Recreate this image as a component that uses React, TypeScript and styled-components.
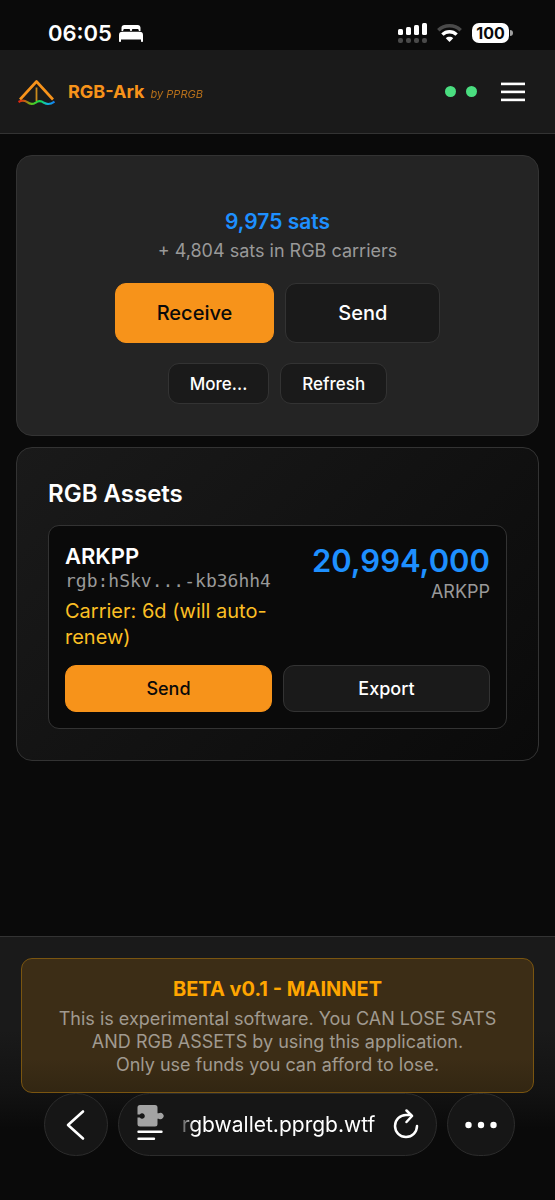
import React from 'react';
import styled, { createGlobalStyle } from 'styled-components';

const GlobalStyle = createGlobalStyle`
  *, *::before, *::after { box-sizing: border-box; }
  body {
    margin: 0;
    background: #0a0a0a;
    color: #fff;
    font-family: Inter, "Liberation Sans", sans-serif;
  }
  button { font-family: inherit; cursor: pointer; }
  h1, h2, h3, p { margin: 0; }
`;

const Page = styled.div`
  min-height: 100vh;
  display: flex;
  flex-direction: column;
`;

const StatusBar = styled.div`
  display: flex;
  align-items: center;
  justify-content: space-between;
  height: 50px;
  padding: 16px 42px 0 48px;
`;

const StatusGroup = styled.div<{ $gap: number }>`
  display: flex;
  align-items: center;
  gap: ${(p) => p.$gap}px;
`;

const Clock = styled.time`
  font-size: 22px;
  line-height: 28px;
  font-weight: 600;
`;

const Battery = styled.div`
  display: flex;
  align-items: center;
  gap: 1px;
`;

const BatteryBody = styled.span`
  width: 37px;
  height: 20px;
  border-radius: 7px;
  background: #fff;
  color: #0a0a0a;
  font-size: 16px;
  line-height: 20px;
  font-weight: 700;
  text-align: center;
`;

const BatteryTip = styled.span`
  width: 3px;
  height: 6px;
  border-radius: 0 3px 3px 0;
  background: #a0a0a0;
`;

const Header = styled.header`
  display: flex;
  align-items: center;
  justify-content: space-between;
  height: 84px;
  padding: 0 30px 0 16px;
  background: #1a1a1a;
  border-bottom: 1px solid #333;
`;

const Brand = styled.a`
  display: flex;
  align-items: center;
  gap: 10px;
  color: #f7931a;
  text-decoration: none;
`;

const BrandText = styled.span`
  display: flex;
  align-items: baseline;
  gap: 6px;
`;

const BrandName = styled.span`
  font-size: 18px;
  line-height: 26px;
  font-weight: 700;
`;

const Byline = styled.span`
  font-size: 11px;
  line-height: 16px;
  font-style: italic;
  opacity: 0.7;
`;

const HeaderActions = styled.div`
  display: flex;
  align-items: center;
  gap: 10px;
`;

const StatusDot = styled.span`
  width: 11px;
  height: 11px;
  border-radius: 50%;
  background: #4ade80;
`;

const MenuButton = styled.button`
  display: flex;
  margin-left: 14px;
  padding: 0;
  border: 0;
  background: none;
  color: #fff;
`;

const Main = styled.main`
  flex: 1;
  display: flex;
  flex-direction: column;
  gap: 11px;
  padding: 21px 16px;
`;

const BalanceCard = styled.section`
  display: flex;
  flex-direction: column;
  align-items: center;
  padding: 52px 32px 31px;
  border: 1px solid #333;
  border-radius: 16px;
  background: #242424;
`;

const Balance = styled.p`
  color: #1e90ff;
  font-size: 21px;
  line-height: 28px;
  font-weight: 600;
`;

const CarrierBalance = styled.p`
  margin-bottom: 17px;
  color: #999;
  font-size: 18px;
  line-height: 30px;
`;

const ButtonRow = styled.div`
  display: flex;
  gap: 11px;

  & + & { margin-top: 20px; }
`;

const Button = styled.button<{ $primary?: boolean; $size: 'large' | 'small' | 'fill' }>`
  height: ${(p) => ({ large: 60, small: 41, fill: 47 })[p.$size]}px;
  padding: 0 ${(p) => ({ large: 41, small: 21, fill: 16 })[p.$size]}px;
  min-width: ${(p) => (p.$size === 'large' ? '155px' : '0')};
  flex: ${(p) => (p.$size === 'fill' ? '1 1 0' : 'none')};
  border: 1px solid ${(p) => (p.$primary ? '#f7931a' : '#333')};
  border-radius: 11px;
  background: ${(p) => (p.$primary ? '#f7931a' : '#1a1a1a')};
  color: ${(p) => (p.$primary ? '#0a0a0a' : '#fff')};
  font-size: ${(p) => ({ large: 20, small: 17, fill: 18 })[p.$size]}px;
  font-weight: 500;
`;

const AssetsCard = styled.section`
  padding: 31px;
  border: 1px solid #333;
  border-radius: 16px;
  background: linear-gradient(135deg, #1a1a1a 0%, #0a0a0a 100%);
`;

const SectionTitle = styled.h2`
  margin-bottom: 16px;
  font-size: 24px;
  line-height: 30px;
  font-weight: 600;
`;

const Asset = styled.article`
  padding: 16px;
  border: 1px solid #333;
  border-radius: 11px;
  background: #0a0a0a;
`;

const AssetInfo = styled.div`
  display: flex;
  justify-content: space-between;
  gap: 16px;
  margin-bottom: 15px;
`;

const AssetName = styled.h3`
  font-size: 22px;
  line-height: 28px;
  font-weight: 600;
`;

const AssetId = styled.p`
  margin-bottom: 6px;
  color: #999;
  font-family: "DejaVu Sans Mono", monospace;
  font-size: 18px;
  line-height: 22px;
`;

const CarrierNote = styled.p`
  color: #fbbf24;
  font-size: 20px;
  line-height: 26px;
`;

const AssetAmount = styled.div`
  text-align: right;
`;

const Amount = styled.p`
  color: #1e90ff;
  font-size: 31px;
  line-height: 38px;
  font-weight: 600;
`;

const Ticker = styled.p`
  color: #999;
  font-size: 18px;
  line-height: 24px;
`;

const Footer = styled.footer`
  padding: 21px 21px 0;
  border-top: 1px solid #333;
  background: linear-gradient(#1a1a1a 60%, #121212);
`;

const Notice = styled.div`
  padding: 16px 32px;
  border: 1px solid #7a5510;
  border-radius: 11px;
  background: linear-gradient(#3c2d16 75%, #322612);
  text-align: center;
`;

const NoticeTitle = styled.p`
  margin-bottom: 4px;
  color: #ffa500;
  font-size: 20px;
  line-height: 28px;
  font-weight: 700;
`;

const NoticeText = styled.p`
  color: #a09a90;
  font-size: 18px;
  line-height: 23px;
`;

const BrowserBar = styled.nav`
  display: flex;
  gap: 10px;
  padding: 0 40px 44px 44px;
  background: linear-gradient(#121212, #0a0a0a 36px);
`;

const RoundButton = styled.button<{ $width: number }>`
  display: flex;
  align-items: center;
  justify-content: center;
  width: ${(p) => p.$width}px;
  height: 63px;
  padding: 0;
  border: 1px solid #2c2c2c;
  border-radius: 34px;
  background: #161616;
  color: #fff;
`;

const AddressBar = styled.div`
  flex: 1;
  display: flex;
  align-items: center;
  justify-content: space-between;
  height: 63px;
  padding: 0 17px 0 18px;
  border: 1px solid #2c2c2c;
  border-radius: 32px;
  background: #161616;
`;

const BarButton = styled.button`
  display: flex;
  padding: 0;
  border: 0;
  background: none;
  color: #fff;
`;

const Address = styled(BarButton)`
  font-size: 21px;
  line-height: 28px;
  mask-image: linear-gradient(90deg, rgba(0, 0, 0, 0.25), #000 12px);
`;

const BedIcon = () => (
  <svg width="24" height="17" viewBox="0 0 24 17" fill="#fff" aria-hidden="true">
    <path d="M2.5 6V2.8C2.5 1.2 3.6 0 5.3 0h13.4c1.7 0 2.8 1.2 2.8 2.8V6h-1.7V5.400c0-1-.5-1.500-1.500-1.500h-4c-.9 0-1.500.5-1.500 1.400V6h-1.600v-.7c0-.9-.6-1.400-1.500-1.400h-4c-1 0-1.500.5-1.500 1.500V6z" />
    <path d="M0 10c0-2 1.200-3.200 3.200-3.200h17.600C22.800 6.800 24 8 24 10v6.200c0 .5-.3.800-.8.800h-.4c-.5 0-.8-.3-.8-.8V14.500H2v1.700c0 .5-.3.800-.8.800H.8c-.5 0-.8-.3-.8-.8z" />
  </svg>
);

const SignalIcon = () => (
  <svg width="29" height="20" viewBox="0 0 29 20" aria-hidden="true">
    {[6, 8, 10, 12].map((h, i) => (
      <g key={h}>
        <rect x={i * 8} y={12 - h} width="5" height={h} rx="1.500" fill="#fff" />
        <rect x={i * 8} y="15" width="5" height="5" rx="2" fill="#4a4a4a" />
      </g>
    ))}
  </svg>
);

const WifiIcon = () => (
  <svg width="25" height="18" viewBox="0 0 25 18" fill="none" strokeWidth="3.400" aria-hidden="true">
    <path d="M1.300 6.300C7.300.2 17.700.2 23.700 6.300" stroke="#4a4a4a" />
    <path d="M5.400 10.600c4-3.900 10.200-3.900 14.200 0" stroke="#fff" />
    <path d="M12.500 18l-3.700-3.800c2-1.900 5.400-1.900 7.400 0z" fill="#fff" />
  </svg>
);

const LogoIcon = () => (
  <svg width="42" height="30" viewBox="0 0 42 30" fill="none" aria-hidden="true">
    <defs>
      <linearGradient id="wave" x1="2" y1="0" x2="39" y2="0" gradientUnits="userSpaceOnUse">
        <stop offset="0" stopColor="#e81c10" />
        <stop offset="0.18" stopColor="#c85a10" />
        <stop offset="0.36" stopColor="#5cc41c" />
        <stop offset="0.6" stopColor="#14dc50" />
        <stop offset="0.8" stopColor="#10b4e0" />
        <stop offset="1" stopColor="#1478f0" />
      </linearGradient>
    </defs>
    <path d="M4 22.500L20.500 4.500 37 22.500" stroke="#f7931a" strokeWidth="2.600" strokeLinejoin="round" />
    <path d="M20.500 10.500V24" stroke="#c98a1c" strokeWidth="1.800" />
    <path
      d="M2.500 25c3-2 6-1.800 8.800.2 2.600 2.200 5.400 2.400 8.400.4 2.800-2.200 5.300-2 8.300.2 3.600 2.200 6.600 1.600 10.500-1.200"
      stroke="url(#wave)"
      strokeWidth="2.200"
    />
  </svg>
);

const MenuIcon = () => (
  <svg width="24" height="20" viewBox="0 0 24 20" fill="#fff" aria-hidden="true">
    <rect y="0.600" width="24" height="2.600" />
    <rect y="8.600" width="24" height="2.600" />
    <rect y="16.600" width="24" height="2.600" />
  </svg>
);

const BackIcon = () => (
  <svg width="20" height="32" viewBox="0 0 20 32" fill="none" stroke="currentColor" strokeWidth="2.600" strokeLinecap="round" strokeLinejoin="round" aria-hidden="true">
    <path d="M17 2.500L2 16l15 13.500" />
  </svg>
);

const SiteIcon = () => (
  <svg width="27" height="40" viewBox="0 0 27 40" aria-hidden="true">
    <path
      d="M3 0h15a2.500 2.500 0 0 1 2.500 2.500V8.300h1.200a3.200 3.200 0 1 1 0 5.400h-1.200V19a2.500 2.500 0 0 1-2.500 2.500H3A2.500 2.500 0 0 1 .5 19v-6.600h2.300a2.700 2.700 0 1 0 0-2.800H.5V2.500A2.500 2.500 0 0 1 3 0z"
      fill="#a3a3a3"
    />
    <path d="M1.500 26.800h23M1.500 33.800H17" stroke="#fff" strokeWidth="2.400" strokeLinecap="round" />
  </svg>
);

const ReloadIcon = () => (
  <svg width="26" height="32" viewBox="0 0 26 32" fill="none" stroke="currentColor" strokeWidth="2.500" strokeLinecap="round" strokeLinejoin="round" aria-hidden="true">
    <path d="M24 17A11 11 0 1 1 13 6h5" />
    <path d="M13.500 .500l5.500 5.500-5.500 6" transform="translate(0 1)" />
  </svg>
);

const MoreIcon = () => (
  <svg width="32" height="8" viewBox="0 0 32 8" fill="currentColor" aria-hidden="true">
    <circle cx="3.500" cy="4" r="3.200" />
    <circle cx="16" cy="4" r="3.200" />
    <circle cx="28.500" cy="4" r="3.200" />
  </svg>
);

export default function App() {
  return (
    <Page>
      <GlobalStyle />
      <StatusBar>
        <StatusGroup $gap={7}>
          <Clock>06:05</Clock>
          <BedIcon />
        </StatusGroup>
        <StatusGroup $gap={10}>
          <SignalIcon />
          <WifiIcon />
          <Battery>
            <BatteryBody>100</BatteryBody>
            <BatteryTip />
          </Battery>
        </StatusGroup>
      </StatusBar>

      <Header>
        <Brand href="#">
          <LogoIcon />
          <BrandText>
            <BrandName>RGB-Ark</BrandName>
            <Byline>by PPRGB</Byline>
          </BrandText>
        </Brand>
        <HeaderActions>
          <StatusDot />
          <StatusDot />
          <MenuButton aria-label="Menu">
            <MenuIcon />
          </MenuButton>
        </HeaderActions>
      </Header>

      <Main>
        <BalanceCard>
          <Balance>9,975 sats</Balance>
          <CarrierBalance>+ 4,804 sats in RGB carriers</CarrierBalance>
          <ButtonRow>
            <Button $primary $size="large">Receive</Button>
            <Button $size="large">Send</Button>
          </ButtonRow>
          <ButtonRow>
            <Button $size="small">More...</Button>
            <Button $size="small">Refresh</Button>
          </ButtonRow>
        </BalanceCard>

        <AssetsCard>
          <SectionTitle>RGB Assets</SectionTitle>
          <Asset>
            <AssetInfo>
              <div>
                <AssetName>ARKPP</AssetName>
                <AssetId>rgb:hSkv...-kb36hh4</AssetId>
                <CarrierNote>Carrier: 6d (will auto-renew)</CarrierNote>
              </div>
              <AssetAmount>
                <Amount>20,994,000</Amount>
                <Ticker>ARKPP</Ticker>
              </AssetAmount>
            </AssetInfo>
            <ButtonRow>
              <Button $primary $size="fill">Send</Button>
              <Button $size="fill">Export</Button>
            </ButtonRow>
          </Asset>
        </AssetsCard>
      </Main>

      <Footer>
        <Notice>
          <NoticeTitle>BETA v0.1 - MAINNET</NoticeTitle>
          <NoticeText>
            This is experimental software. You CAN LOSE SATS AND RGB ASSETS by using this application.
          </NoticeText>
          <NoticeText>Only use funds you can afford to lose.</NoticeText>
        </Notice>
      </Footer>

      <BrowserBar aria-label="Browser">
        <RoundButton $width={64} aria-label="Back">
          <BackIcon />
        </RoundButton>
        <AddressBar>
          <BarButton aria-label="Page settings">
            <SiteIcon />
          </BarButton>
          <Address>rgbwallet.pprgb.wtf</Address>
          <BarButton aria-label="Reload">
            <ReloadIcon />
          </BarButton>
        </AddressBar>
        <RoundButton $width={68} aria-label="More">
          <MoreIcon />
        </RoundButton>
      </BrowserBar>
    </Page>
  );
}
